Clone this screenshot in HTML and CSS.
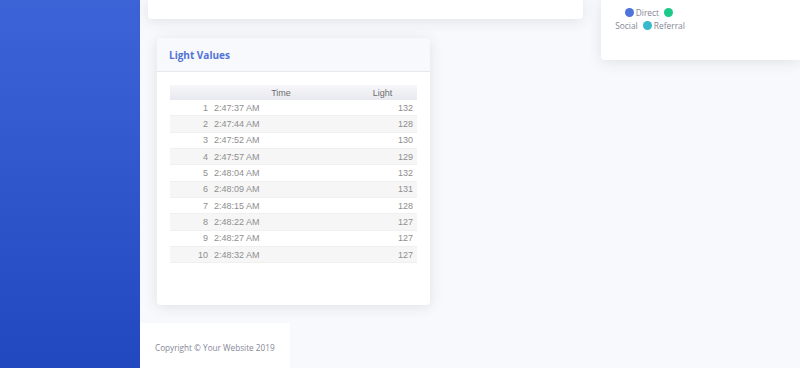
FILE: index.html
```html
<!DOCTYPE html>
<html lang="en">
<head>
    <meta charset="UTF-8">
    <meta name="viewport" content="width=device-width, initial-scale=1.0">
    <title>Dashboard</title>
    <link rel="stylesheet" href="styles.css">
</head>
<body>
    <aside class="sidebar"></aside>
    <div class="content">
        <div class="grid">
            <div class="left-col">
                <div class="card top-card"></div>
                <div class="card light-card">
                    <div class="card-header">
                        <h6>Light Values</h6>
                    </div>
                    <div class="card-body">
                        <table class="values">
                            <thead>
                                <tr><th></th><th>Time</th><th>Light</th></tr>
                            </thead>
                            <tbody>
                                <tr><td>1</td><td>2:47:37 AM</td><td>132</td></tr>
                                <tr><td>2</td><td>2:47:44 AM</td><td>128</td></tr>
                                <tr><td>3</td><td>2:47:52 AM</td><td>130</td></tr>
                                <tr><td>4</td><td>2:47:57 AM</td><td>129</td></tr>
                                <tr><td>5</td><td>2:48:04 AM</td><td>132</td></tr>
                                <tr><td>6</td><td>2:48:09 AM</td><td>131</td></tr>
                                <tr><td>7</td><td>2:48:15 AM</td><td>128</td></tr>
                                <tr><td>8</td><td>2:48:22 AM</td><td>127</td></tr>
                                <tr><td>9</td><td>2:48:27 AM</td><td>127</td></tr>
                                <tr><td>10</td><td>2:48:32 AM</td><td>127</td></tr>
                            </tbody>
                        </table>
                    </div>
                </div>
            </div>
            <div class="right-col">
                <div class="card chart-card">
                    <div class="legend">
                        <span class="dot primary"></span>Direct <span class="dot success"></span><br>
                        Social <span class="dot info"></span>Referral
                    </div>
                </div>
            </div>
        </div>
        <footer>
            <span>Copyright &copy; Your Website 2019</span>
        </footer>
    </div>
</body>
</html>
```

FILE: styles.css
```css
body {
    margin: 0;
    height: 368px;
    overflow: hidden;
    display: flex;
    font-family: 'Open Sans', sans-serif;
    background-color: #f8f9fc;
}

.sidebar {
    width: 140px;
    flex-shrink: 0;
    background: linear-gradient(180deg, #3d64d7 0%, #2148bf 100%);
}

.content {
    flex: 1;
    display: flex;
    flex-direction: column;
    min-width: 0;
}

.grid {
    display: flex;
    height: 323px;
}

.left-col {
    width: 435px;
    padding-left: 8px;
}

.right-col {
    flex: 1;
    padding-left: 18px;
}

.card {
    background-color: #fff;
    border-radius: 4px;
    box-shadow: 0 2px 14px rgba(58, 59, 69, 0.12);
}

.top-card {
    height: 19px;
    border-radius: 0 0 4px 4px;
}

.light-card {
    margin: 19px 0 0 9px;
    width: 273px;
    height: 267px;
    overflow: hidden;
}

.card-header {
    height: 33px;
    display: flex;
    align-items: center;
    padding-left: 12px;
    background-color: #f8f9fc;
    border-bottom: 1px solid #e6e8f0;
}

.card-header h6 {
    margin: 0;
    font-size: 10px;
    font-weight: 700;
    color: #5173d6;
}

.card-body {
    padding: 13px 13px 0 13px;
}

.values {
    width: 247px;
    border-collapse: collapse;
    font-family: 'Liberation Sans', Arial, sans-serif;
    font-size: 9px;
    color: #8e8e8e;
}

.values th {
    height: 15px;
    padding: 0;
    font-weight: normal;
    color: #6f6f6f;
    background: linear-gradient(180deg, #f7f7fa 0%, #e8e9ef 100%);
}

.values td {
    height: 15.33px;
    padding: 0;
    border-bottom: 1px solid #f0f0f0;
}

.values tbody tr:nth-child(even) td {
    background-color: #f6f6f6;
}

.values td:nth-child(1) {
    width: 38px;
    text-align: right;
    padding-right: 6px;
}

.values th:nth-child(1) {
    width: 40px;
}

.values th:nth-child(2),
.values td:nth-child(2) {
    width: 134px;
}

.values td:nth-child(3) {
    text-align: right;
    padding-right: 4px;
}

.chart-card {
    height: 60px;
    border-radius: 0 0 0 4px;
    padding-left: 13px;
}

.legend {
    width: 72px;
    padding-top: 6px;
    text-align: center;
    font-size: 8.4px;
    line-height: 13px;
    color: #858796;
}

.dot {
    display: inline-block;
    width: 9px;
    height: 9px;
    margin-right: 2px;
    border-radius: 50%;
    vertical-align: -1px;
}

.dot.success,
.dot.info {
    margin-left: 3px;
}

.dot.primary { background-color: #4e73df; }
.dot.success { background-color: #1cc88a; }
.dot.info { background-color: #36b9cc; }

footer {
    width: 150px;
    flex: 1;
    background-color: #fff;
    display: flex;
    align-items: center;
    padding: 4px 0 0 15px;
    box-sizing: border-box;
    font-size: 8.2px;
    color: #858796;
}
```
